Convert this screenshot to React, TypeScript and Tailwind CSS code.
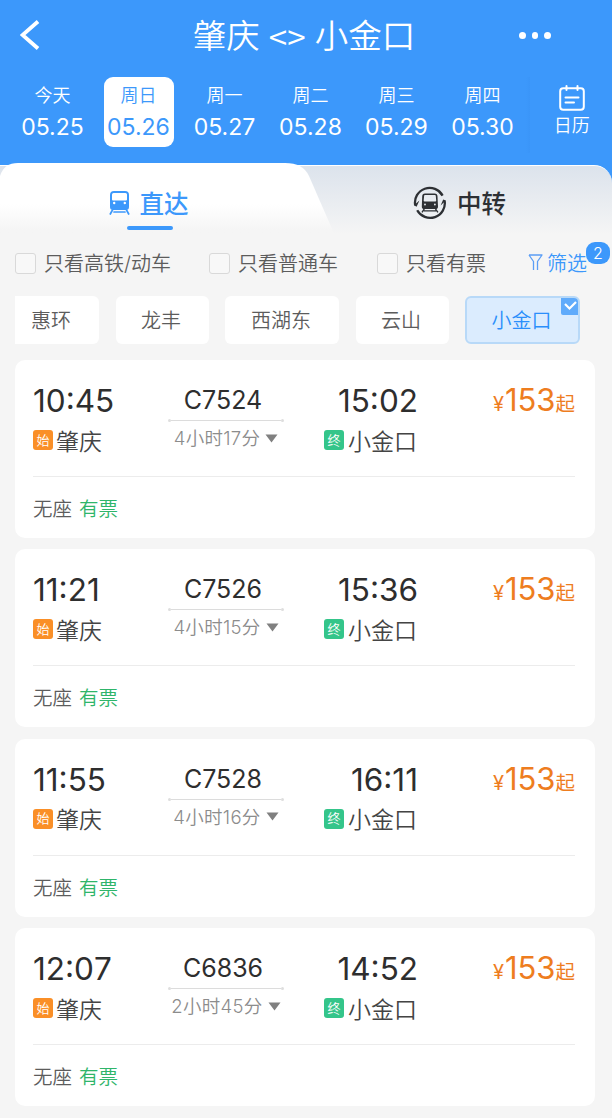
const DAYS = [
  ['今天', '05.25'],
  ['周日', '05.26'],
  ['周一', '05.27'],
  ['周二', '05.28'],
  ['周三', '05.29'],
  ['周四', '05.30'],
];

const TRAINS = [
  { dep: '10:45', no: 'C7524', dur: '4小时17分', arr: '15:02' },
  { dep: '11:21', no: 'C7526', dur: '4小时15分', arr: '15:36' },
  { dep: '11:55', no: 'C7528', dur: '4小时16分', arr: '16:11' },
  { dep: '12:07', no: 'C6836', dur: '2小时45分', arr: '14:52' },
];

function TrainIcon() {
  return (
    <svg width="22" height="24" viewBox="0 0 22 24" fill="none">
      <path
        fillRule="evenodd"
        fill="#3c98fb"
        d="M5 0h11A4 4 0 0 1 20 4V16a3 3 0 0 1-3 3H4a3 3 0 0 1-3-3V4A4 4 0 0 1 5 0ZM4.500 2a1.500 1.500 0 0 0-1.500 1.500V8.500a1 1 0 0 0 1 1h13a1 1 0 0 0 1-1V3.500A1.500 1.500 0 0 0 16.500 2ZM5.200 10.800a1.200 1.200 0 1 0 0 2.400 1.200 1.200 0 0 0 0-2.400ZM15.800 10.800a1.200 1.200 0 1 0 0 2.400 1.200 1.200 0 0 0 0-2.400Z"
      />
      <path d="M3.500 19 1.300 23M17.500 19l2.200 4M5 21h11" stroke="#3c98fb" strokeWidth="1.700" strokeLinecap="round" />
    </svg>
  );
}

function TransferIcon() {
  return (
    <svg width="34" height="34" viewBox="0 0 34 34" fill="none">
      <g stroke="#2d3034" strokeWidth="2.300">
        <path d="M2.200 19.200A14.700 14.700 0 0 1 29.600 9.600" />
        <path d="M31.600 14.600A14.700 14.700 0 0 1 4.200 24.200" />
      </g>
      <path d="M1 19.200 6.400 14.400 3.600 20.800ZM32.800 14.600 27.600 19.600 30.200 13.400Z" fill="#2d3034" />
      <path
        fillRule="evenodd"
        fill="#2d3034"
        d="M12 7.500h9.500A3 3 0 0 1 24.500 10.500l.5 10a2.600 2.600 0 0 1-2.600 2.600H11.400A2.600 2.600 0 0 1 8.800 20.500l.4-10A3 3 0 0 1 12 7.500ZM12 9a.9.9 0 0 0-.9.9l-.4 4.700a.9.9 0 0 0 .9.9h10.700a.9.9 0 0 0 .9-.9l-.4-4.700a.9.9 0 0 0-.9-.9ZM12 17.600a.9.900 0 1 0 0 1.800.9.9 0 0 0 0-1.800ZM21.900 17.600a.9.900 0 1 0 0 1.800.9.9 0 0 0 0-1.800Z"
      />
      <path d="M11.300 23 9 26.300M22.500 23l2.400 3.300M11 24.900h12" stroke="#2d3034" strokeWidth="1.400" />
    </svg>
  );
}

function Check({ label, className }: { label: string; className: string }) {
  return (
    <div className={'flex items-center ' + className}>
      <span className="size-[21px] shrink-0 rounded-[3px] border-[1.5px] border-[#d9d9d9] bg-[#f8f8f8]" />
      <span className="mt-[1px] ml-[8px] text-[20px] leading-6 font-[350] whitespace-nowrap text-[#5c5c5c]">{label}</span>
    </div>
  );
}

function TrainCard({ t }: { t: (typeof TRAINS)[number] }) {
  return (
    <article className="h-[178px] shrink-0 rounded-[10px] bg-white pr-5 pl-[18px]">
      <div className="flex h-[117px] border-b border-[#ececec]">
        <div className="w-[127px] pt-[23px]">
          <div className="h-9 text-[31.500px] leading-9 text-[#2e2e2e] [font-kerning:none]">{t.dep}</div>
          <div className="mt-[8px] flex h-[26px] items-center">
            <span className="flex size-5 items-center justify-center rounded-[3px] bg-[#fa8f27] text-[13px] leading-none font-[350] text-white">始</span>
            <span className="mt-[3px] ml-[3px] text-[23px] leading-[26px] font-[350] text-[#444]">肇庆</span>
          </div>
        </div>
        <div className="flex w-[132px] flex-col items-center pt-[25px]">
          <div className="mr-[6px] h-[30px] text-[25px] leading-[30px] text-[#2e2e2e]">{t.no}</div>
          <div className="mt-1 flex w-[116px] items-center">
            <i className="size-[3px] rounded-full bg-[#dedede]" />
            <i className="h-px flex-1 bg-[#dcdcdc]" />
            <i className="size-[3px] rounded-full bg-[#dedede]" />
          </div>
          <div className="mt-1 flex h-6 items-center gap-[5px] text-[18.500px] leading-6 tracking-[0.3px] whitespace-nowrap text-[#8c8c8c]">
            <span className="font-[350]">{t.dur}</span>
            <svg width="13" height="9" viewBox="0 0 13 9"><path d="M.5.500h12L6.500 8.500Z" fill="#808080" /></svg>
          </div>
        </div>
        <div className="flex w-[125px] flex-col items-end pt-[23px]">
          <div className="-mr-px h-9 text-[31.500px] leading-9 text-[#2e2e2e] [font-kerning:none]">{t.arr}</div>
          <div className="mt-[8px] flex h-[26px] items-center">
            <span className="flex size-5 items-center justify-center rounded-[3px] bg-[#34c58a] text-[13px] leading-none font-[350] text-white">终</span>
            <span className="mt-[3px] ml-[4px] text-[23px] leading-[26px] font-[350] text-[#444]">小金口</span>
          </div>
        </div>
        <div className="flex flex-1 items-baseline justify-end pt-[22px] text-[#ee7d1f]">
          <span className="mr-px text-[20px]">¥</span>
          <span className="text-[31px] leading-9">153</span>
          <span className="text-[19.500px]">起</span>
        </div>
      </div>
      <div className="flex h-[61px] items-center gap-[7px] pt-[4px] text-[19.500px] font-[350] text-[#5c5c5c]">
        <span>无座</span>
        <span className="text-[#2fb56a]">有票</span>
      </div>
    </article>
  );
}

export default function App() {
  return (
    <main className="h-[1118px] w-[612px] overflow-hidden bg-[#f5f5f5] font-['Inter','Noto_Sans_CJK_SC',sans-serif]">
      <header className="h-[163px] bg-[#3c98fb] text-white">
        <div className="grid h-[76.500px] grid-cols-[100px_1fr_100px] items-center pb-[6px]">
          <svg className="ml-5" width="20" height="30" viewBox="0 0 20 30" fill="none">
            <path d="M18 1.500 2.500 15 18 28.500" stroke="white" strokeWidth="3.800" />
          </svg>
          <h1 className="flex items-center justify-center gap-[9px] pt-[2px] pr-1 text-[33.500px] font-[350] whitespace-nowrap">
            <span>肇庆</span>
            <span className="font-['Noto_Sans_CJK_SC']">&lt;&gt;</span>
            <span>小金口</span>
          </h1>
          <div className="flex gap-[6px] pl-[7px]">
            <i className="size-[6.500px] rounded-full bg-white" />
            <i className="size-[6.500px] rounded-full bg-white" />
            <i className="size-[6.500px] rounded-full bg-white" />
          </div>
        </div>
        <nav className="flex h-[70px] pl-[9.500px]">
          {DAYS.map(([day, date], i) => (
            <div key={date} className="flex w-[86px] shrink-0 justify-center">
              <div className={'flex w-[70px] flex-col items-center rounded-[9px] pt-[6px] whitespace-nowrap ' + (i === 1 ? 'bg-white text-[#3c98fb]' : '')}>
                <span className="text-[18px] leading-[26px] font-[350]">{day}</span>
                <span className="mt-[4px] text-[23px] leading-[28px]">{date}</span>
              </div>
            </div>
          ))}
          <div className="h-[76px] w-[4px] shrink-0 bg-linear-to-r from-[#3c98fb] to-[#3a95f8]" />
          <div className="flex flex-1 flex-col items-center pt-[8px] pl-[2px]">
            <svg width="26" height="26" viewBox="0 0 26 26" fill="none" stroke="white" strokeWidth="2" strokeLinecap="round">
              <rect x="1.200" y="3.200" width="23.600" height="21.600" rx="3" />
              <path d="M7.500 1v4M18.500 1v4M6.500 12.500h13M6.500 17.500h8.500" />
            </svg>
            <span className="mt-[2px] text-[18px] leading-[26px] font-[350]">日历</span>
          </div>
        </nav>
      </header>

      <section className="relative h-[75px] bg-linear-to-b from-[#3c98fb] from-30% to-[#f5f5f5] to-30%">
        <div className="absolute inset-x-0 top-[2px] bottom-0 rounded-tr-[18px] border-t-[1.500px] border-white bg-linear-to-b from-[#dce3ec] to-[#f5f5f5] to-95%" />
        <div className="absolute inset-y-0 left-0 w-[336px] bg-linear-to-b from-white from-55% to-[#f5f5f5] to-90% [clip-path:path('M0_13Q4_0_18_0H285Q303_0_309_13L336_75H0Z')]" />
        <div className="relative grid h-full grid-cols-[297px_1fr]">
          <div className="flex flex-col items-center">
            <div className="mt-[24px] flex h-8 items-center gap-[9px] text-[24.500px] font-medium text-[#3c98fb]">
              <TrainIcon />
              <span className="mt-[3px]">直达</span>
            </div>
            <i className="mt-[7px] ml-[3px] h-1 w-[46px] rounded-full bg-[#3c98fb]" />
          </div>
          <div className="mt-[24px] flex h-8 items-center gap-[10px] pl-[116px] text-[24.500px] font-medium text-[#2d3034]">
            <TransferIcon />
            <span className="mt-[3px]">中转</span>
          </div>
        </div>
      </section>

      <section className="flex h-[50px] items-center pl-[15px]">
        <Check label="只看高铁/动车" className="w-[194px]" />
        <Check label="只看普通车" className="w-[168px]" />
        <Check label="只看有票" className="w-[151px]" />
        <div className="relative flex items-center text-[20px] font-[350] text-[#3c98fb]">
          <svg width="15" height="18" viewBox="0 0 15 18" fill="none" stroke="#5b9df5" strokeWidth="1.300" strokeLinejoin="round">
            <path d="M1 1h13L9.500 7.500V16M1 1l4.500 6.500V16" />
          </svg>
          <span className="mt-[1px] ml-[4px] leading-6">筛选</span>
          <span className="absolute -top-[9px] left-[58px] flex h-[22px] w-6 items-center justify-center rounded-[9px] bg-[#3c98fb] text-[16px] text-white">2</span>
        </div>
      </section>

      <section className="mt-[8px] flex h-12 gap-[16.500px] pl-[15px] text-[20px] font-[350] text-[#5c5c5c]">
        <div className="flex w-[84px] items-center rounded-r-[6px] bg-white pt-[2px] pl-[16px]">惠环</div>
        <div className="flex w-[93px] items-center justify-center rounded-[6px] bg-white pt-[2px] pr-[2px]">龙丰</div>
        <div className="flex w-[114px] items-center justify-center rounded-[6px] bg-white pt-[2px] pr-[2px]">西湖东</div>
        <div className="flex w-[93px] items-center justify-center rounded-[6px] bg-white pt-[2px] pr-[2px]">云山</div>
        <div className="relative flex w-[115px] items-center justify-center rounded-[6px] border-2 border-[#b8d9f8] bg-[#dbecfe] pt-[2px] pr-[2px] text-[#2b8ffb]">
          小金口
          <svg className="absolute top-0 right-0" width="17" height="17" viewBox="0 0 17 17" fill="none">
            <path d="M0 0h13a4 4 0 0 1 4 4v13H2a2 2 0 0 1-2-2Z" fill="#60abfb" />
            <path d="m4 6 4.500 4.500L15 4" stroke="white" strokeWidth="2.200" />
          </svg>
        </div>
      </section>

      <section className="mt-4 flex flex-col gap-[11.400px] px-[15px] pr-[17px]">
        {TRAINS.map((t) => (
          <TrainCard key={t.no} t={t} />
        ))}
      </section>
    </main>
  );
}
